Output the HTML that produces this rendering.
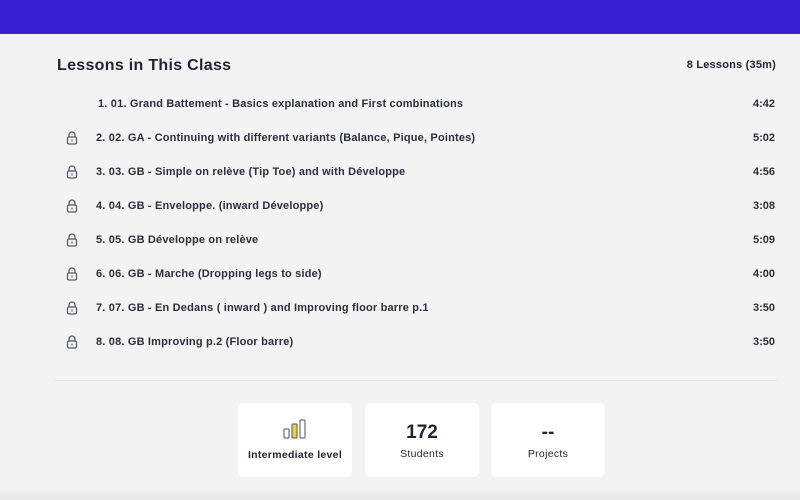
<!DOCTYPE html>
<html><head><style>
body{margin:0;width:800px;height:500px;background:#f3f3f3;font-family:"Liberation Sans",sans-serif;color:#1e2431;position:relative;overflow:hidden}
.bar{position:absolute;left:0;top:0;width:800px;height:34px;background:#3620d2}
.h{position:absolute;left:57px;top:57px;font-size:16px;font-weight:bold;letter-spacing:0.3px}
.cnt{position:absolute;right:24px;top:59px;font-size:11px;font-weight:bold;letter-spacing:0.2px}
.row{position:absolute;left:0;width:800px;height:16px;font-size:11px;line-height:16px;font-weight:bold;color:#2a303c}
.row .t{position:absolute;left:96px;letter-spacing:0.18px}
.row .d{position:absolute;right:25px}
.row svg{position:absolute;left:66px;top:1px}
.line{position:absolute;left:55px;top:380px;width:722px;height:1px;background:#e2e2e2}
.card{position:absolute;top:403px;width:114px;height:74px;background:#fff;border-radius:6px;text-align:center}
.card .n{position:absolute;top:19px;width:100%;font-size:19px;font-weight:bold}
.card .l{position:absolute;top:45px;width:100%;font-size:10.5px;letter-spacing:0.3px}
.shadow{position:absolute;left:0;top:488px;width:800px;height:12px;background:linear-gradient(#f3f3f3,#e6e6e6)}
</style></head><body>
<div class="bar"></div>
<div class="h">Lessons in This Class</div>
<div class="cnt">8 Lessons (35m)</div>

<div class="row" style="top:96px"><span class="t" style="left:98px">1. 01. Grand Battement - Basics explanation and First combinations</span><span class="d">4:42</span></div>
<div class="row" style="top:130px"><svg width="12" height="14" viewBox="0 0 12 14"><path d="M3 6V4a3 3 0 0 1 6 0v2" fill="none" stroke="#555c66" stroke-width="1.3"/><rect x="1.5" y="6" width="9" height="7" rx="1.5" fill="none" stroke="#555c66" stroke-width="1.3"/><rect x="5.4" y="8.5" width="1.2" height="2" fill="#555c66"/></svg><span class="t">2. 02. GA - Continuing with different variants (Balance, Pique, Pointes)</span><span class="d">5:02</span></div>
<div class="row" style="top:164px"><svg width="12" height="14" viewBox="0 0 12 14"><path d="M3 6V4a3 3 0 0 1 6 0v2" fill="none" stroke="#555c66" stroke-width="1.3"/><rect x="1.5" y="6" width="9" height="7" rx="1.5" fill="none" stroke="#555c66" stroke-width="1.3"/><rect x="5.4" y="8.5" width="1.2" height="2" fill="#555c66"/></svg><span class="t">3. 03. GB - Simple on relève (Tip Toe) and with Développe</span><span class="d">4:56</span></div>
<div class="row" style="top:198px"><svg width="12" height="14" viewBox="0 0 12 14"><path d="M3 6V4a3 3 0 0 1 6 0v2" fill="none" stroke="#555c66" stroke-width="1.3"/><rect x="1.5" y="6" width="9" height="7" rx="1.5" fill="none" stroke="#555c66" stroke-width="1.3"/><rect x="5.4" y="8.5" width="1.2" height="2" fill="#555c66"/></svg><span class="t">4. 04. GB - Enveloppe. (inward Développe)</span><span class="d">3:08</span></div>
<div class="row" style="top:232px"><svg width="12" height="14" viewBox="0 0 12 14"><path d="M3 6V4a3 3 0 0 1 6 0v2" fill="none" stroke="#555c66" stroke-width="1.3"/><rect x="1.5" y="6" width="9" height="7" rx="1.5" fill="none" stroke="#555c66" stroke-width="1.3"/><rect x="5.4" y="8.5" width="1.2" height="2" fill="#555c66"/></svg><span class="t">5. 05. GB Développe on relève</span><span class="d">5:09</span></div>
<div class="row" style="top:266px"><svg width="12" height="14" viewBox="0 0 12 14"><path d="M3 6V4a3 3 0 0 1 6 0v2" fill="none" stroke="#555c66" stroke-width="1.3"/><rect x="1.5" y="6" width="9" height="7" rx="1.5" fill="none" stroke="#555c66" stroke-width="1.3"/><rect x="5.4" y="8.5" width="1.2" height="2" fill="#555c66"/></svg><span class="t">6. 06. GB - Marche (Dropping legs to side)</span><span class="d">4:00</span></div>
<div class="row" style="top:300px"><svg width="12" height="14" viewBox="0 0 12 14"><path d="M3 6V4a3 3 0 0 1 6 0v2" fill="none" stroke="#555c66" stroke-width="1.3"/><rect x="1.5" y="6" width="9" height="7" rx="1.5" fill="none" stroke="#555c66" stroke-width="1.3"/><rect x="5.4" y="8.5" width="1.2" height="2" fill="#555c66"/></svg><span class="t">7. 07. GB - En Dedans ( inward ) and Improving floor barre p.1</span><span class="d">3:50</span></div>
<div class="row" style="top:334px"><svg width="12" height="14" viewBox="0 0 12 14"><path d="M3 6V4a3 3 0 0 1 6 0v2" fill="none" stroke="#555c66" stroke-width="1.3"/><rect x="1.5" y="6" width="9" height="7" rx="1.5" fill="none" stroke="#555c66" stroke-width="1.3"/><rect x="5.4" y="8.5" width="1.2" height="2" fill="#555c66"/></svg><span class="t">8. 08. GB Improving p.2 (Floor barre)</span><span class="d">3:50</span></div>

<div class="line"></div>

<div class="card" style="left:238px">
<svg style="position:absolute;left:45px;top:16px" width="24" height="20" viewBox="0 0 24 20"><rect x="1" y="10" width="5" height="9" rx="1" fill="none" stroke="#6b6f78" stroke-width="1.2"/><rect x="9" y="5" width="5" height="14" rx="1" fill="#f0d21a" stroke="#6b6f78" stroke-width="1.2"/><rect x="17" y="1" width="5" height="18" rx="1" fill="none" stroke="#6b6f78" stroke-width="1.2"/></svg>
<div class="l" style="top:46px;font-weight:bold">Intermediate level</div></div>
<div class="card" style="left:365px"><div class="n">172</div><div class="l">Students</div></div>
<div class="card" style="left:491px"><div class="n">--</div><div class="l">Projects</div></div>
<div class="shadow"></div>
</body></html>
